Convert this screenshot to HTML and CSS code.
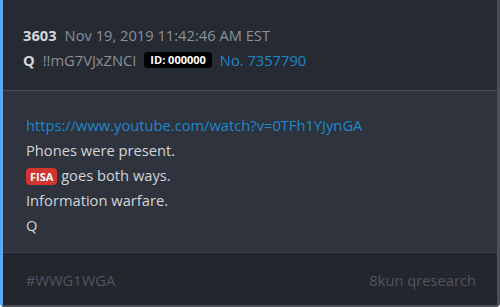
FILE: index.html
```html
<!DOCTYPE HTML>
<html>

<head>
    <link rel="stylesheet" href="styles.css">
    <title>Q drop 3603</title>
</head>

<body>
    <div class="post">
        <div class="head">
            <div class="row">
                <span class="num">3603</span>
                <span class="date">Nov 19, 2019 11:42:46 AM EST</span>
            </div>
            <div class="row">
                <span class="num">Q</span>
                <span class="trip">!!mG7VJxZNCI</span>
                <span class="id">ID: 000000</span>
                <a class="link" href="#">No. 7357790</a>
            </div>
        </div>
        <div class="text">
            <p><a class="link" href="#">https://www.youtube.com/watch?v=0TFh1YJynGA</a></p>
            <p>Phones were present.</p>
            <p><span class="tag">FISA</span> goes both ways.</p>
            <p>Information warfare.</p>
            <p>Q</p>
        </div>
        <div class="foot">
            <span>#WWG1WGA</span>
            <span>8kun qresearch</span>
        </div>
    </div>
</body>

</html>
```

FILE: styles.css
```css
body {
    margin: 0;
    background-color: #ffffff;
    font-family: "Open Sans", "Noto Sans", sans-serif;
    font-size: 14.7px;
}
.post {
    width: 500px;
    height: 307px;
    box-sizing: border-box;
    border-left: 3px solid #5aa8f2;
    border-right: 3px solid #4a4f58;
    border-bottom: 2px solid #4a4f58;
    border-radius: 0 0 4px 4px;
    background-color: #2e333d;
    display: flex;
    flex-direction: column;
}
.head {
    background-color: #262a33;
    height: 91px;
    box-sizing: border-box;
    padding: 22px 20px 0 20px;
    border-bottom: 1px solid #4b505a;
}
.row {
    display: flex;
    align-items: center;
    gap: 8px;
    height: 25px;
}
.num {
    color: #d4d6da;
    font-weight: bold;
}
.date,
.trip {
    color: #8b9099;
}
.id {
    background-color: #000000;
    color: #ffffff;
    font-size: 11px;
    font-weight: bold;
    padding: 0 6px;
    height: 16px;
    line-height: 16px;
    border-radius: 4px;
}
.link {
    color: #1e88c8;
    text-decoration: none;
}
.text {
    flex: 1;
    padding: 22px 23px 0 23px;
    color: #d2d4d8;
}
.text p {
    margin: 0;
    height: 25px;
    line-height: 25px;
}
.tag {
    background-color: #d23430;
    color: #ffffff;
    font-size: 11px;
    font-weight: bold;
    padding: 1px 4px;
    border-radius: 4px;
}
.foot {
    background-color: #23262d;
    height: 53px;
    box-sizing: border-box;
    border-top: 1px solid #3f444e;
    padding: 2px 21px 0 23px;
    display: flex;
    align-items: center;
    justify-content: space-between;
    color: #50555e;
}
```
